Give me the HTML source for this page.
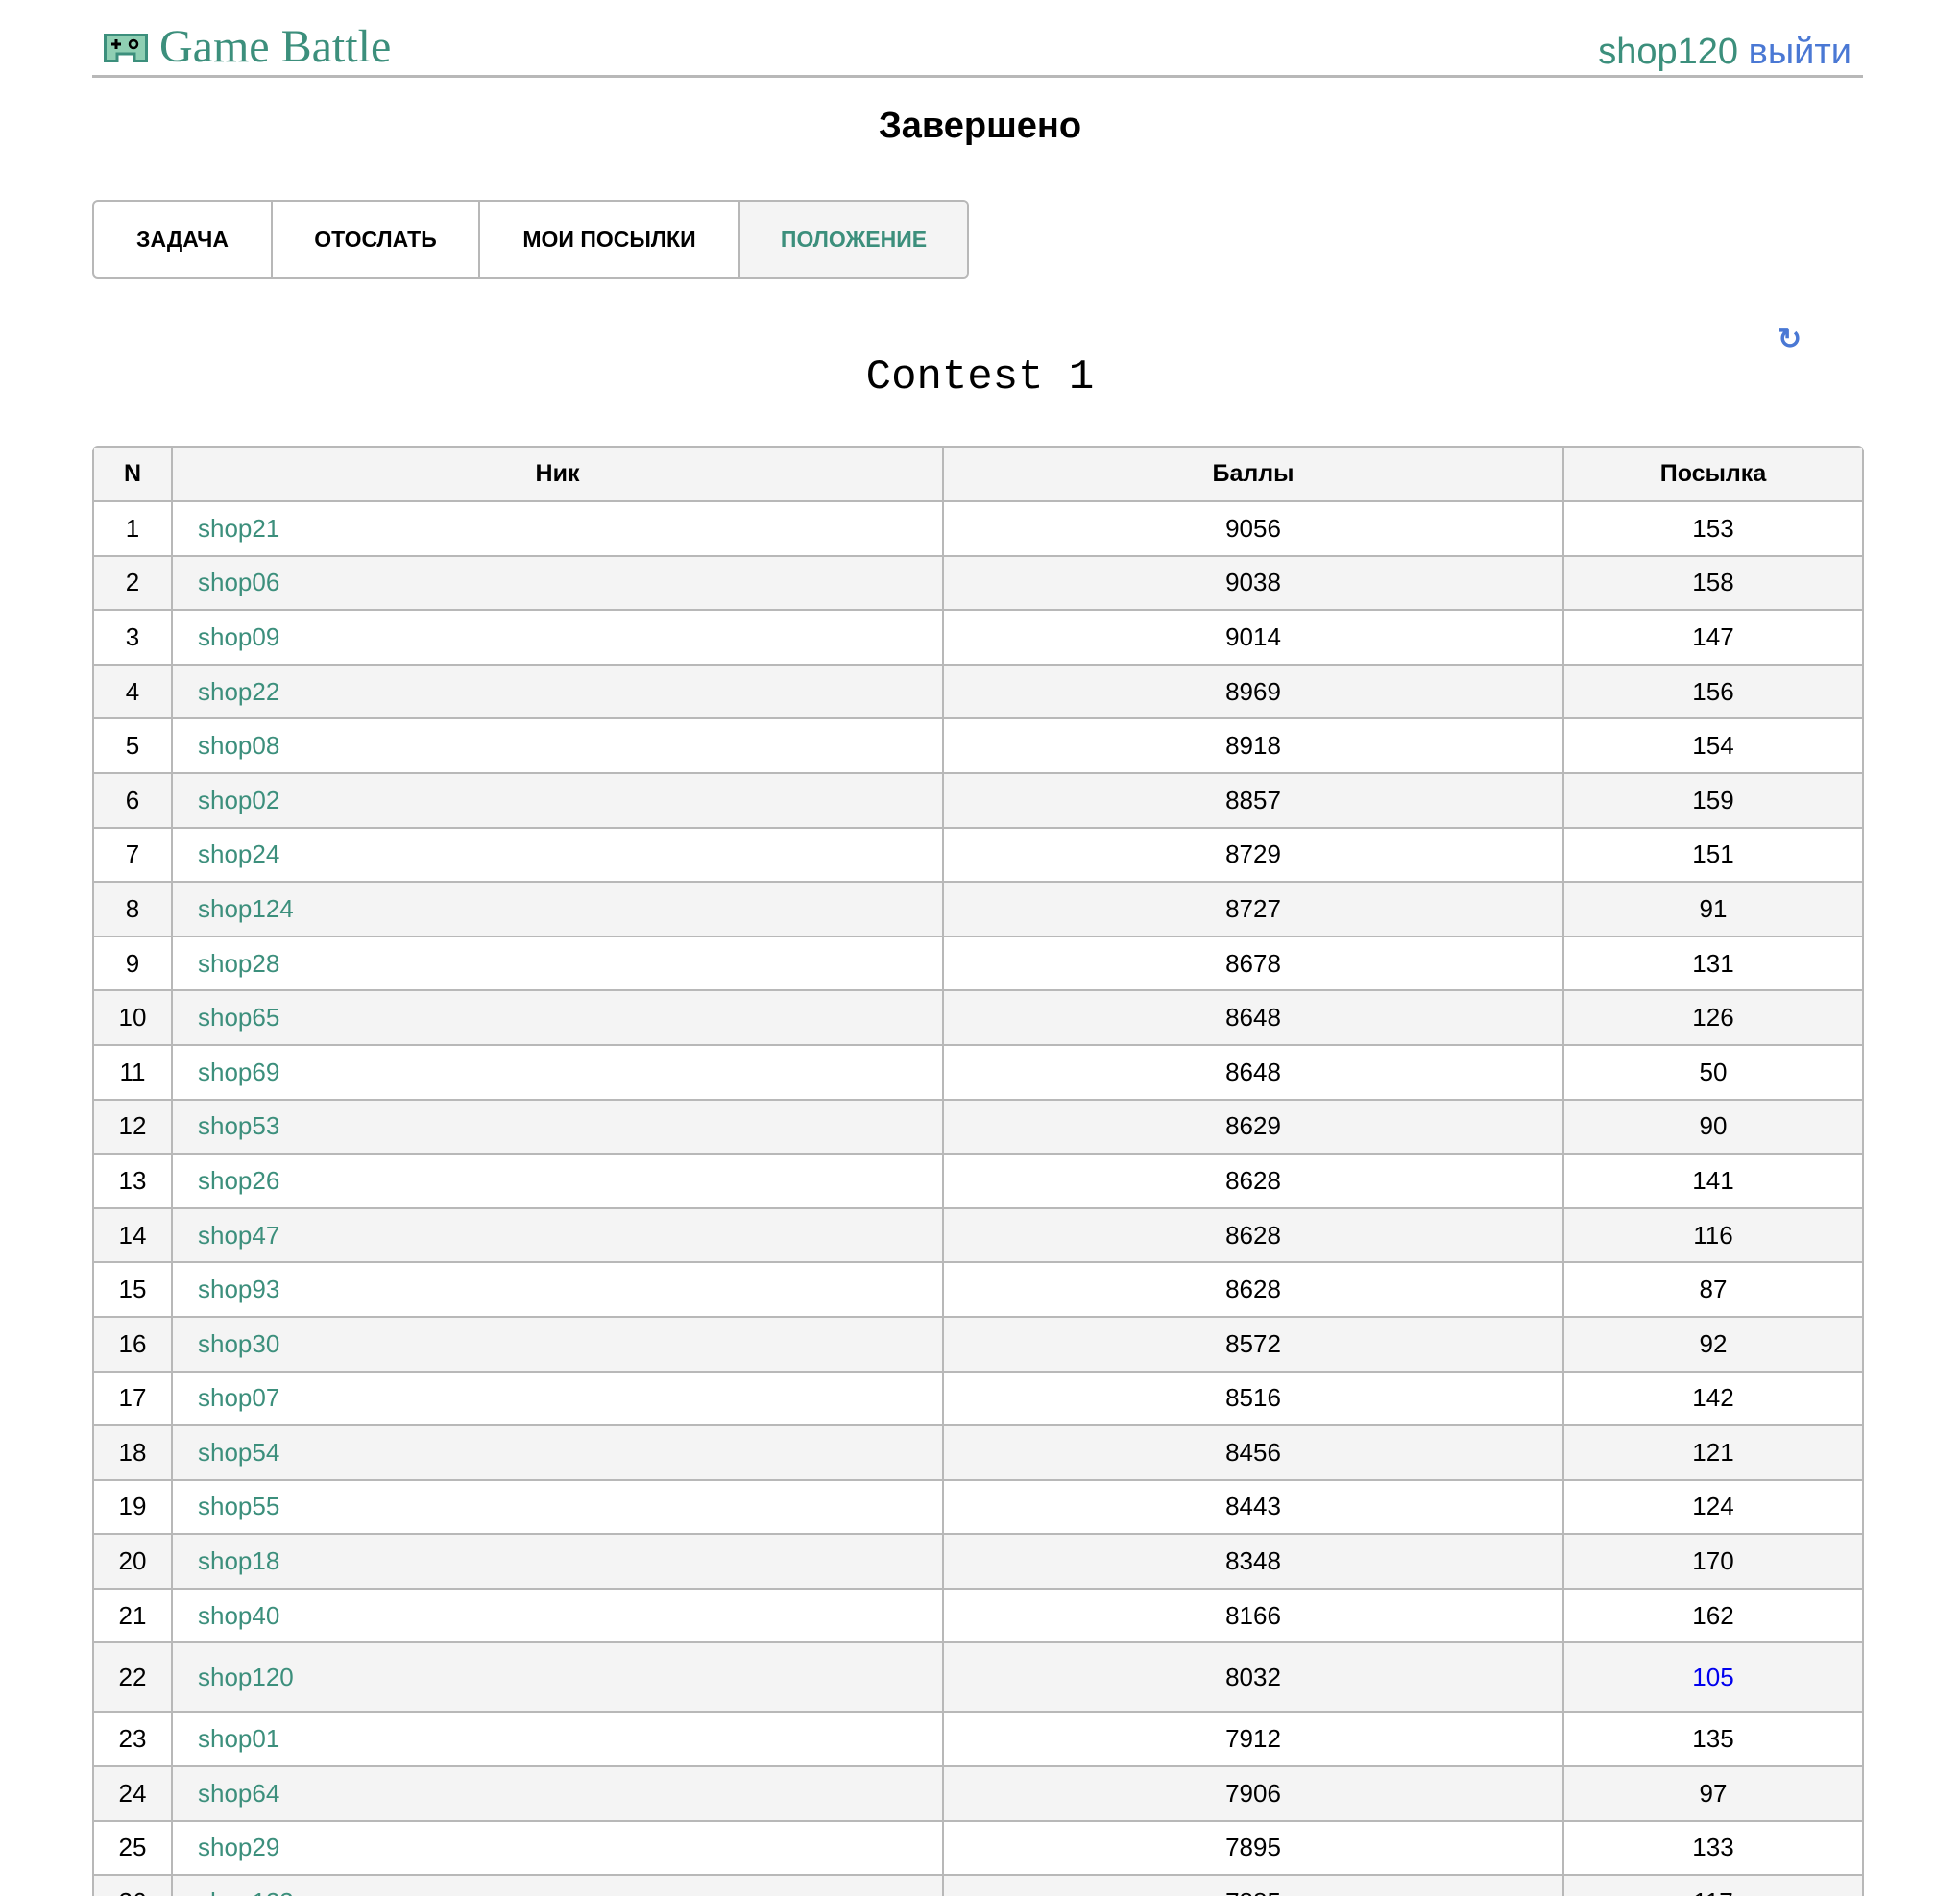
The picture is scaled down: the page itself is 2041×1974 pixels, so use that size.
<!DOCTYPE html>
<html><head><meta charset="utf-8"><style>
html,body{margin:0;overflow:hidden}
body{background:#fff;font-family:"Liberation Sans",Arial,sans-serif;width:2041px;height:1974px;position:relative}
#wrap{position:relative;width:2041px;height:1974px;overflow:hidden}
.hdr{position:absolute;left:96px;top:0;width:1844px;height:78px;border-bottom:3px solid #b8b8b8}
.logo{position:absolute;left:12px;top:35px}
.title{position:absolute;left:70px;top:21px;font-family:"Liberation Serif",serif;font-size:48px;color:#3c8f7c}
.user{position:absolute;right:12px;top:33px;font-size:38px;color:#3c8f7c}
.user span{color:#4a78d4}
h1{position:absolute;left:0;width:2041px;top:110px;margin:0;text-align:center;font-size:38px;font-weight:bold}
.tabs{position:absolute;left:96px;top:208px;height:78px;width:909px;border:2px solid #b8b8b8;border-radius:6px;display:flex;overflow:hidden}
.tabs div{display:flex;align-items:center;justify-content:center;font-weight:bold;font-size:23px;border-right:2px solid #b8b8b8;box-sizing:border-box}
.tabs div:last-child{border-right:none;background:#f4f4f4;color:#3c8f7c}
.contest{position:absolute;left:0;width:2041px;text-align:center;top:368px;font-family:"Liberation Mono",monospace;font-size:44px}
.ref{position:absolute;left:1851px;top:336px;font-size:30px;color:#4a78d4;font-weight:bold}
table{position:absolute;left:96px;top:464px;width:1845px;border-collapse:separate;border-spacing:0;border:2px solid #b8b8b8;border-radius:6px;font-size:26px}
td,th{border-right:2px solid #b8b8b8;border-bottom:2px solid #b8b8b8;text-align:center;padding:0;height:54.6px}
td:last-child,th:last-child{border-right:none}
th{background:#f4f4f4;font-weight:bold;height:55px;font-size:25px}
tr:nth-child(odd) td{background:#f4f4f4}
td.n{text-align:left;padding-left:26px;color:#3c8f7c}
tr.me td{height:70px}
</style></head><body><div id="wrap">
<div class="hdr">
<svg class="logo" width="46" height="30" viewBox="0 0 46 30"><path d="M1.5 1.5H44.5V28.5H32V21H14V28.5H1.5Z" fill="#8fcfb3" stroke="#3c8f7c" stroke-width="3"/><path d="M8 11H18M13 6V16" stroke="#000" stroke-width="3"/><circle cx="31" cy="11" r="4" fill="none" stroke="#000" stroke-width="2.5"/></svg>
<div class="title">Game Battle</div>
<div class="user">shop120 <span>выйти</span></div>
</div>
<h1>Завершено</h1>
<div class="tabs"><div style="width:186px">ЗАДАЧА</div><div style="width:216px">ОТОСЛАТЬ</div><div style="width:271px">МОИ ПОСЫЛКИ</div><div style="width:236px">ПОЛОЖЕНИЕ</div></div>
<div class="ref">↻</div>
<div class="contest">Contest 1</div>
<table>
<colgroup><col style="width:82px"><col style="width:803px"><col style="width:646px"><col></colgroup>
<tr><th>N</th><th>Ник</th><th>Баллы</th><th>Посылка</th></tr>
<tr><td>1</td><td class="n">shop21</td><td>9056</td><td>153</td></tr>
<tr><td>2</td><td class="n">shop06</td><td>9038</td><td>158</td></tr>
<tr><td>3</td><td class="n">shop09</td><td>9014</td><td>147</td></tr>
<tr><td>4</td><td class="n">shop22</td><td>8969</td><td>156</td></tr>
<tr><td>5</td><td class="n">shop08</td><td>8918</td><td>154</td></tr>
<tr><td>6</td><td class="n">shop02</td><td>8857</td><td>159</td></tr>
<tr><td>7</td><td class="n">shop24</td><td>8729</td><td>151</td></tr>
<tr><td>8</td><td class="n">shop124</td><td>8727</td><td>91</td></tr>
<tr><td>9</td><td class="n">shop28</td><td>8678</td><td>131</td></tr>
<tr><td>10</td><td class="n">shop65</td><td>8648</td><td>126</td></tr>
<tr><td>11</td><td class="n">shop69</td><td>8648</td><td>50</td></tr>
<tr><td>12</td><td class="n">shop53</td><td>8629</td><td>90</td></tr>
<tr><td>13</td><td class="n">shop26</td><td>8628</td><td>141</td></tr>
<tr><td>14</td><td class="n">shop47</td><td>8628</td><td>116</td></tr>
<tr><td>15</td><td class="n">shop93</td><td>8628</td><td>87</td></tr>
<tr><td>16</td><td class="n">shop30</td><td>8572</td><td>92</td></tr>
<tr><td>17</td><td class="n">shop07</td><td>8516</td><td>142</td></tr>
<tr><td>18</td><td class="n">shop54</td><td>8456</td><td>121</td></tr>
<tr><td>19</td><td class="n">shop55</td><td>8443</td><td>124</td></tr>
<tr><td>20</td><td class="n">shop18</td><td>8348</td><td>170</td></tr>
<tr><td>21</td><td class="n">shop40</td><td>8166</td><td>162</td></tr>
<tr class="me"><td>22</td><td class="n">shop120</td><td>8032</td><td style="color:#0000ee">105</td></tr>
<tr><td>23</td><td class="n">shop01</td><td>7912</td><td>135</td></tr>
<tr><td>24</td><td class="n">shop64</td><td>7906</td><td>97</td></tr>
<tr><td>25</td><td class="n">shop29</td><td>7895</td><td>133</td></tr>
<tr><td>26</td><td class="n">shop123</td><td>7885</td><td>117</td></tr>
</table>
</div></body></html>
